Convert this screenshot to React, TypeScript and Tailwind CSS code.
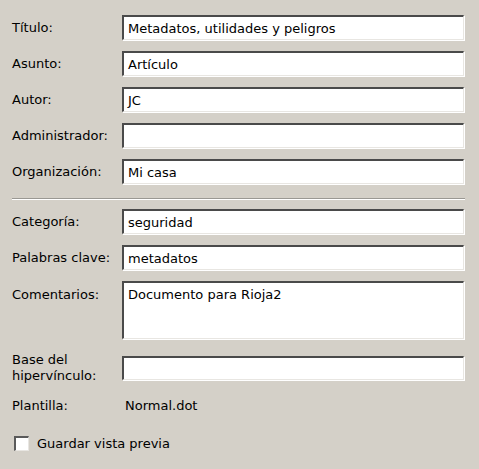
import React from "react";

const font = { fontFamily: "Tahoma, 'DejaVu Sans', sans-serif" };

function Field({ value = "", h = "h-[25px]", multi = false }: { value?: string; h?: string; multi?: boolean }) {
  return (
    <div
      className={`w-[342px] ${h} bg-white border-t-2 border-l-2 border-b border-r border-t-[#4a4a4a] border-l-[#4a4a4a] border-b-[#e8e6e2] border-r-[#e8e6e2] shadow-[1px_1px_0_#ffffff] flex ${multi ? "items-start pt-[5px]" : "items-center"} pl-[4px] text-[13px] text-black leading-none`}
    >
      {value}
    </div>
  );
}

function Row({ label, value, h, multi, align = "items-center", labelCls = "" }: { label: React.ReactNode; value?: string; h?: string; multi?: boolean; align?: string; labelCls?: string }) {
  return (
    <div className={`flex ${align}`}>
      <div className={`w-[110px] text-[13px] text-black leading-[16px] ${labelCls}`}>{label}</div>
      <Field value={value} h={h} multi={multi} />
    </div>
  );
}

export default function App() {
  return (
    <div style={font} className="w-[479px] h-[469px] bg-[#d4d0c8] pl-[12px] pt-[15px] overflow-hidden">
      <div className="flex flex-col gap-[11px]">
        <Row label="Título:" value="Metadatos, utilidades y peligros" />
        <Row label="Asunto:" value="Artículo" />
        <Row label="Autor:" value="JC" />
        <Row label="Administrador:" value="" />
        <Row label="Organización:" value="Mi casa" />
      </div>
      <div className="mt-[14px] mb-[9px] w-[453px] border-t border-b border-t-[#9a9893] border-b-white" />
      <div className="flex flex-col gap-[11px]">
        <Row label="Categoría:" value="seguridad" />
        <Row label="Palabras clave:" value="metadatos" />
        <Row label="Comentarios:" value="Documento para Rioja2" h="h-[58px]" multi align="items-start" labelCls="pt-[6px]" />
      </div>
      <div className="mt-[13px]">
        <Row label={<>Base del<br />hipervínculo:</>} value="" h="h-[24px]" />
      </div>
      <div className="flex items-center mt-[12px] text-[13px] text-black">
        <div className="w-[113px]">Plantilla:</div>
        <div>Normal.dot</div>
      </div>
      <div className="flex items-center mt-[18px] text-[13px] text-black">
        <div className="w-[15px] h-[15px] ml-[2px] bg-white border-t-2 border-l-2 border-b border-r border-t-[#5a5a5a] border-l-[#5a5a5a] border-b-[#e8e6e2] border-r-[#e8e6e2]" />
        <div className="ml-[8px]">Guardar vista previa</div>
      </div>
    </div>
  );
}
